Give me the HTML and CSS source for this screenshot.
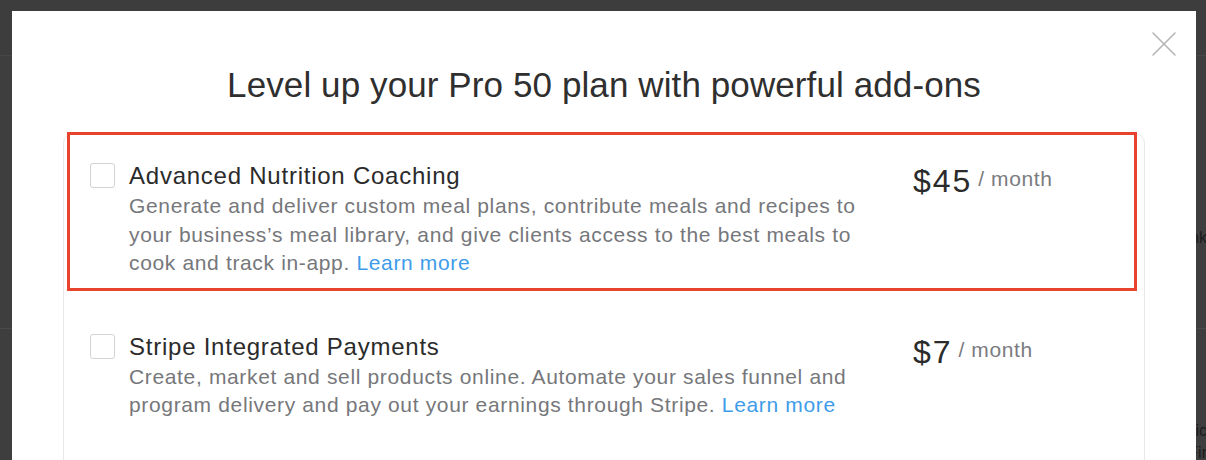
FILE: index.html
```html
<!DOCTYPE html>
<html lang="en">
<head>
<meta charset="utf-8">
<title>Add-ons</title>
<link rel="stylesheet" href="styles.css">
</head>
<body>
<div class="backdrop">
  <div class="bd-header"></div>
  <div class="bd-body">
    <p class="bd-text bd-text--first">Link</p>
    <div class="bd-rule"></div>
    <p class="bd-text bd-text--second">Basic</p>
    <p class="bd-text bd-text--third">Fir</p>
  </div>
</div>

<div class="modal" role="dialog" aria-labelledby="modal-title">
  <button class="close" type="button" aria-label="Close">
    <svg viewBox="0 0 24 24" width="24" height="24" aria-hidden="true">
      <path d="M1 1 L23 23 M23 1 L1 23" stroke="#b5b5b5" stroke-width="1.6" fill="none" stroke-linecap="round"/>
    </svg>
  </button>

  <h2 class="modal-title" id="modal-title">Level up your Pro 50 plan with powerful add-ons</h2>

  <div class="addons">
    <div class="addon addon--highlight">
      <span class="checkbox"></span>
      <div class="addon-info">
        <div class="addon-name">Advanced Nutrition Coaching</div>
        <p class="addon-desc">Generate and deliver custom meal plans, contribute meals and recipes to your business’s meal library, and give clients access to the best meals to cook and track in-app. <a href="#" class="learn">Learn more</a></p>
      </div>
      <div class="addon-price"><span class="amount">$45</span> <span class="per">/ month</span></div>
    </div>

    <div class="addon">
      <span class="checkbox"></span>
      <div class="addon-info">
        <div class="addon-name">Stripe Integrated Payments</div>
        <p class="addon-desc">Create, market and sell products online. Automate your sales funnel and program delivery and pay out your earnings through Stripe. <a href="#" class="learn">Learn more</a></p>
      </div>
      <div class="addon-price"><span class="amount">$7</span> <span class="per">/ month</span></div>
    </div>
  </div>
</div>
</body>
</html>
```
FILE: styles.css
```css
html, body {
  margin: 0;
  padding: 0;
  height: 460px;
  overflow: hidden;
}

body {
  background: #3e3e3e;
  font-family: "Liberation Sans", Arial, Helvetica, sans-serif;
  position: relative;
}

/* ---------- page behind the overlay ---------- */
.backdrop {
  height: 460px;
}

.bd-header {
  height: 55px;
  border-bottom: 1px solid #474747;
  background: #3d3d3d;
}

.bd-body {
  padding-top: 172px;
  text-align: right;
  color: #1c1c1c;
  font-size: 16px;
}

.bd-text {
  margin: 0;
  line-height: 20px;
  margin-right: -1px;
}

.bd-rule {
  height: 1px;
  background: #4a4a4a;
  margin-top: 80px;
}

.bd-text--second {
  margin-top: 92px;
}

.bd-text--third {
  margin-top: 2px;
}

/* ---------- modal ---------- */
.modal {
  position: absolute;
  top: 11px;
  left: 12px;
  width: 1184px;
  height: 460px;
  background: #ffffff;
}

.close {
  position: absolute;
  top: 21px;
  right: 20px;
  width: 24px;
  height: 24px;
  padding: 0;
  border: 0;
  background: none;
  cursor: pointer;
}

.close svg {
  display: block;
}

.modal-title {
  margin: 0;
  padding-top: 53px;
  text-align: center;
  font-size: 35px;
  line-height: 42px;
  letter-spacing: 0.1px;
  font-weight: 400;
  color: #2f2f2f;
}

.addons {
  margin: 27px 51px 0;
  border: 1px solid #e8e8e8;
  border-radius: 10px;
  height: 400px;
}

.addon {
  position: relative;
  display: flex;
  align-items: flex-start;
  padding: 26px 0 27px 26px;
}

.addon--highlight::after {
  content: "";
  position: absolute;
  top: -2px;
  left: 3px;
  right: 7px;
  bottom: 14px;
  border: 3px solid #e8432d;
  pointer-events: none;
}

.checkbox {
  flex: none;
  width: 25px;
  height: 25px;
  box-sizing: border-box;
  margin-top: 3px;
  border: 1px solid #d3d3d3;
  border-radius: 3px;
  background: #fff;
}

.addon-info {
  flex: 1;
  margin-left: 14px;
  min-width: 0;
}

.addon-name {
  font-size: 24px;
  line-height: 32px;
  letter-spacing: 0.76px;
  color: #2b2b2b;
}

.addon-desc {
  margin: 0;
  font-size: 21px;
  line-height: 28.5px;
  letter-spacing: 0.65px;
  color: #76777b;
}

.learn {
  color: #3e9ce9;
  text-decoration: none;
}

.addon-price {
  flex: none;
  width: 231px;
  margin-left: 40px;
  margin-top: 4px;
  line-height: 35px;
  font-size: 21px;
  white-space: nowrap;
}

.amount {
  font-size: 32px;
  letter-spacing: 2px;
  color: #2b2b2b;
}

.per {
  font-size: 21px;
  line-height: 1;
  letter-spacing: 0.6px;
  vertical-align: 6px;
  color: #7a7b7f;
}
```
